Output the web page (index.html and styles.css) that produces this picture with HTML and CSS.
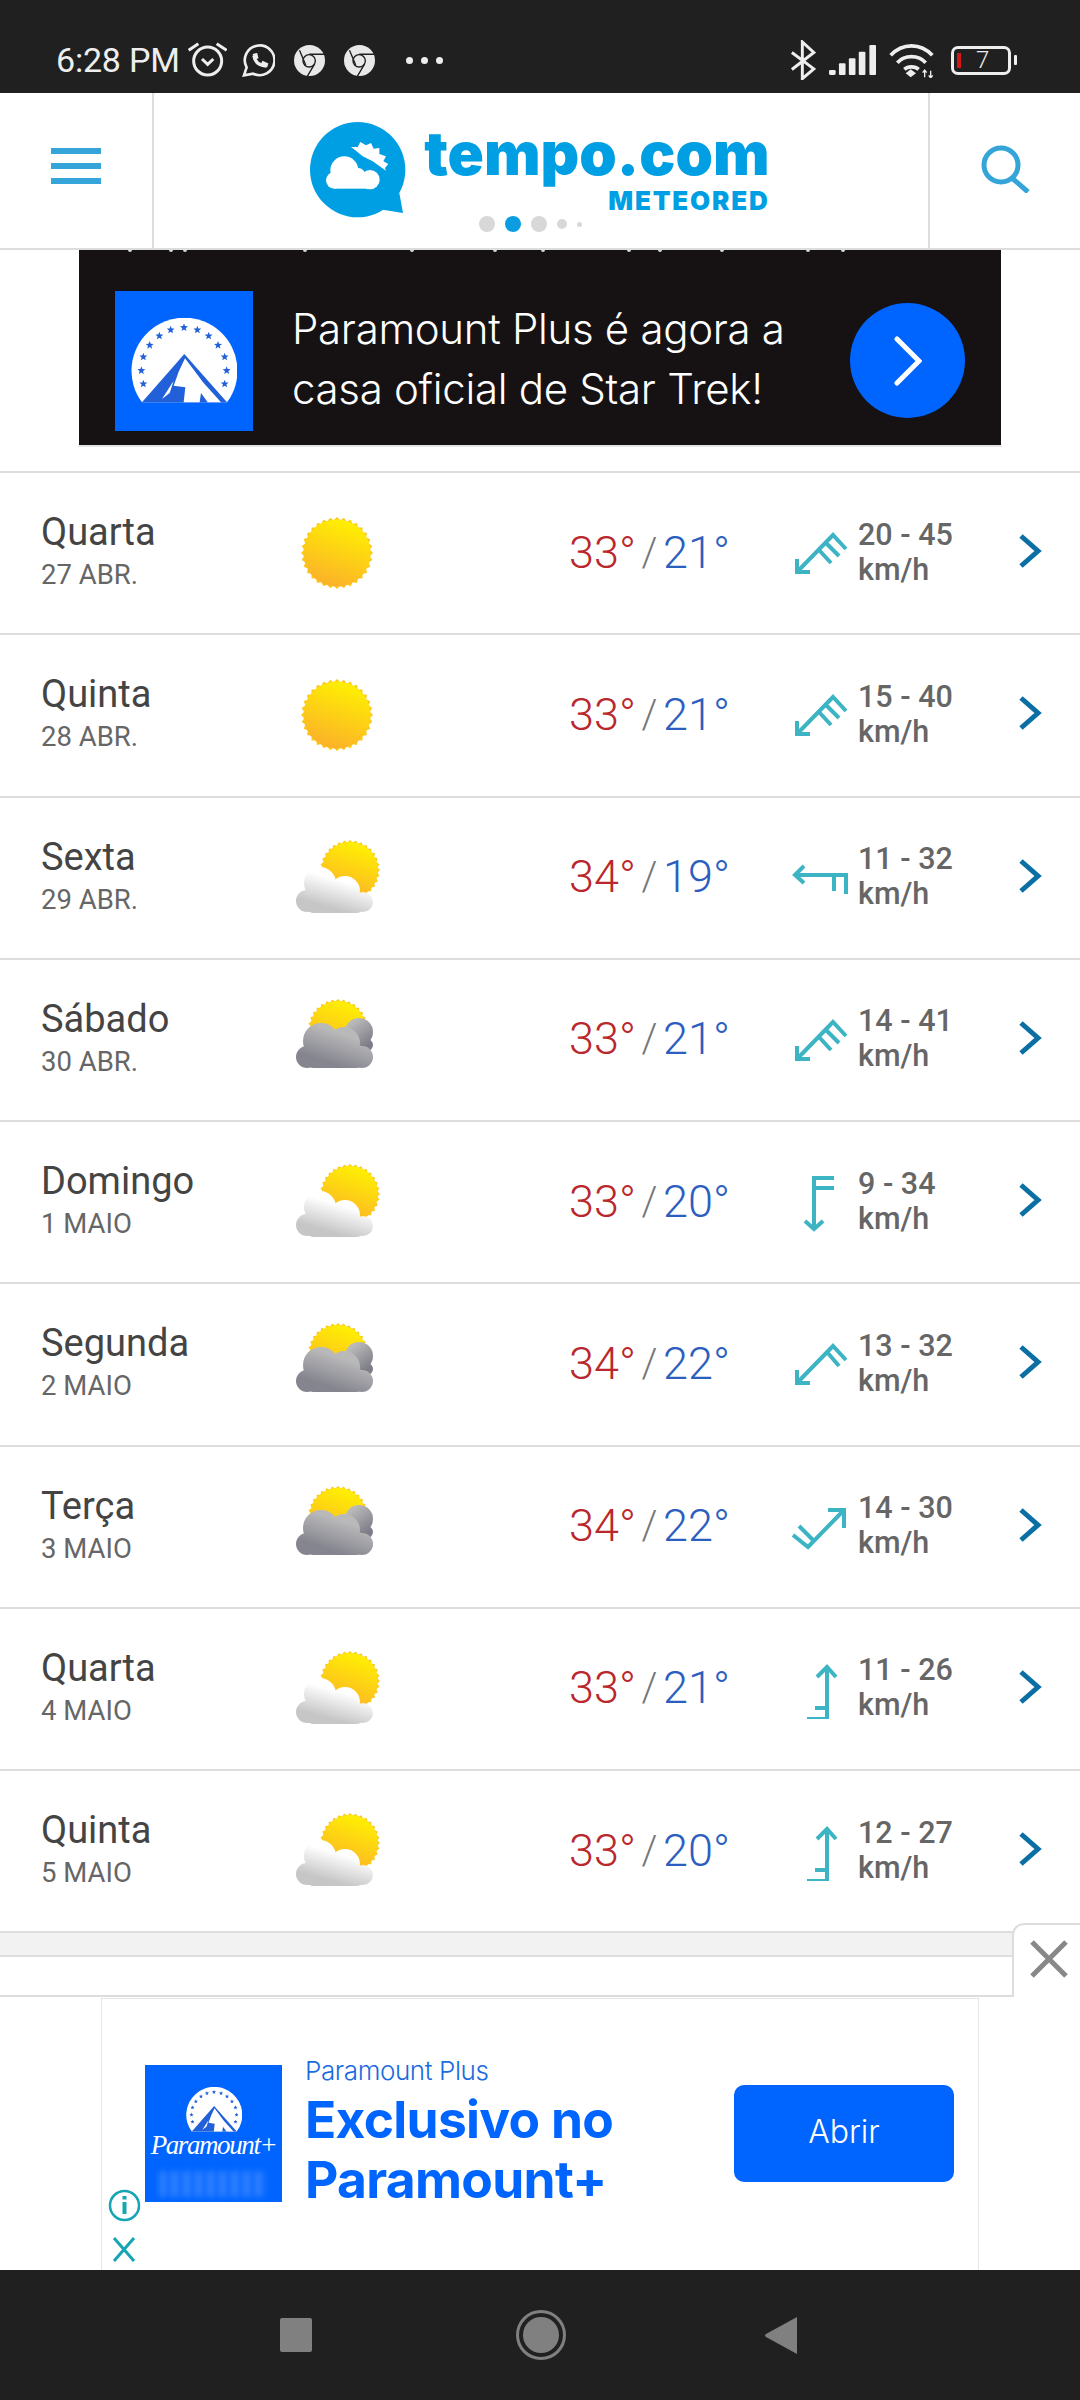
FILE: index.html
```html
<!DOCTYPE html>
<html lang="pt">
<head>
    <meta charset="UTF-8">
    <meta name="viewport" content="width=device-width, initial-scale=1.0">
    <title>tempo.com</title>
    <link rel="stylesheet" href="styles.css">
</head>
<body>
    <svg class="svg-defs" xmlns="http://www.w3.org/2000/svg">
        <defs>
            <linearGradient id="sunFill" x1="0.7" y1="0" x2="0.35" y2="1">
                <stop offset="0" stop-color="#fff200"/>
                <stop offset="1" stop-color="#fbb02a"/>
            </linearGradient>
            <linearGradient id="cloudLight" gradientUnits="userSpaceOnUse" x1="36" y1="44" x2="28" y2="72">
                <stop offset="0" stop-color="#ffffff"/>
                <stop offset="1" stop-color="#c6c6c6"/>
            </linearGradient>
            <linearGradient id="cloudDark" gradientUnits="userSpaceOnUse" x1="42" y1="36" x2="32" y2="66">
                <stop offset="0" stop-color="#b9b9ba"/>
                <stop offset="1" stop-color="#85858f"/>
            </linearGradient>
            <linearGradient id="cloudBack" gradientUnits="userSpaceOnUse" x1="60" y1="28" x2="76" y2="50">
                <stop offset="0" stop-color="#b9b9ba"/>
                <stop offset="1" stop-color="#7d7d88"/>
            </linearGradient>
            <symbol id="spikes" viewBox="-36 -36 72 72">
                <g fill="#fdc81c">
                    <rect x="-25.500" y="-25.500" width="51" height="51"/>
                    <rect x="-25.500" y="-25.500" width="51" height="51" transform="rotate(11.25)"/>
                    <rect x="-25.500" y="-25.500" width="51" height="51" transform="rotate(22.5)"/>
                    <rect x="-25.500" y="-25.500" width="51" height="51" transform="rotate(33.75)"/>
                    <rect x="-25.500" y="-25.500" width="51" height="51" transform="rotate(45)"/>
                    <rect x="-25.500" y="-25.500" width="51" height="51" transform="rotate(56.25)"/>
                    <rect x="-25.500" y="-25.500" width="51" height="51" transform="rotate(67.5)"/>
                    <rect x="-25.500" y="-25.500" width="51" height="51" transform="rotate(78.75)"/>
                </g>
                <circle r="33.500" fill="url(#sunFill)"/>
            </symbol>
            <symbol id="wx-sun" viewBox="0 0 90 90">
                <use href="#spikes" x="9" y="9" width="72" height="72"/>
            </symbol>
            <symbol id="wx-partly" viewBox="0 0 90 90">
                <use href="#spikes" x="28" y="7" width="60" height="60"/>
                <g fill="url(#cloudLight)">
                    <circle cx="28" cy="50" r="16"/>
                    <circle cx="53" cy="58" r="15"/>
                    <circle cx="15" cy="68" r="11"/>
                    <circle cx="71" cy="69" r="10"/>
                    <rect x="15" y="60" width="56" height="20" rx="6"/>
                </g>
            </symbol>
            <symbol id="wx-cloudy" viewBox="0 0 90 90">
                <use href="#spikes" x="16" y="4" width="60" height="60"/>
                <g fill="url(#cloudBack)">
                    <circle cx="67" cy="37" r="14"/>
                    <circle cx="75" cy="50" r="6"/>
                </g>
                <g fill="url(#cloudDark)">
                    <circle cx="29" cy="46" r="18"/>
                    <circle cx="52" cy="48" r="16"/>
                    <circle cx="15" cy="62" r="11"/>
                    <circle cx="70" cy="62" r="11"/>
                    <rect x="15" y="52" width="56" height="21" rx="6"/>
                </g>
            </symbol>
            <symbol id="wind-sw3" viewBox="0 0 60 60">
                <path d="M7 36V49H20M7 49L43 12L56 26M36 20L49 33M29 27L41 40"/>
            </symbol>
            <symbol id="wind-sw2" viewBox="0 0 60 60">
                <path d="M7 36V49H20M7 49L43 12L56 26M37 18L49 32"/>
            </symbol>
            <symbol id="wind-w" viewBox="0 0 60 60">
                <path d="M14 18L5 27L14 35M5 27H56V46M44 27V43"/>
            </symbol>
            <symbol id="wind-s" viewBox="0 0 60 60">
                <path d="M44 6H24V56M44 16H24M15 49L24 57L33 49"/>
            </symbol>
            <symbol id="wind-ne" viewBox="0 0 60 60">
                <path d="M38 13H54V31M54 13L18 50L3 38M23 43L9 29"/>
            </symbol>
            <symbol id="wind-n" viewBox="0 0 60 60">
                <path d="M27 18L37 8L46 18M37 8V60H17M37 49H25"/>
            </symbol>
            <symbol id="chev" viewBox="0 0 24 36">
                <path d="M3 3L20 18L3 33"/>
            </symbol>
            <symbol id="chrome" viewBox="342 30 90 90">
                <circle cx="387" cy="75" r="45" fill="#e8e8e8"/>
                <circle cx="386" cy="76" r="18" fill="#e8e8e8" stroke="#202020" stroke-width="4"/>
                <path d="M386 57H430M358 45L376 88M402 85L380 122" stroke="#202020" stroke-width="4" fill="none"/>
            </symbol>
            <symbol id="star" viewBox="0 0 10 10">
                <polygon points="5,0 6.3,3.4 10,3.6 7.1,6 8.1,9.6 5,7.6 1.900,9.6 2.900,6 0,3.600 3.700,3.400" fill="#2360d8"/>
            </symbol>
            <symbol id="pm-mark" viewBox="62 97 318 255">
                <path d="M95 350A159 159 0 1 1 350 350Z" fill="#fff"/>
                <path d="M222 205L95 350H350Z" fill="#2160d8"/>
                <path d="M224 218L262 268L278 290L332 350H292L272 322L268 350H220L225 305L190 300L205 258Z" fill="#fff"/>
                <path d="M155 340L190 285L178 322Z" fill="#fff"/>
                <use href="#star" x="209" y="113" width="24" height="24"/>
                <use href="#star" x="169" y="120" width="24" height="24"/>
                <use href="#star" x="249" y="120" width="24" height="24"/>
                <use href="#star" x="135" y="138" width="24" height="24"/>
                <use href="#star" x="283" y="138" width="24" height="24"/>
                <use href="#star" x="106" y="166" width="24" height="24"/>
                <use href="#star" x="311" y="166" width="24" height="24"/>
                <use href="#star" x="87" y="201" width="24" height="24"/>
                <use href="#star" x="331" y="201" width="24" height="24"/>
                <use href="#star" x="81" y="242" width="24" height="24"/>
                <use href="#star" x="337" y="242" width="24" height="24"/>
                <use href="#star" x="87" y="282" width="24" height="24"/>
                <use href="#star" x="331" y="282" width="24" height="24"/>
            </symbol>
        </defs>
    </svg>

    <div class="status-bar">
        <span class="clock">6:28 PM</span>
        <svg class="st-alarm" viewBox="21 20 120 108" fill="none" stroke="#eee">
            <circle cx="83" cy="77" r="42" stroke-width="9"/>
            <path d="M26 45L55 25M110 25L140 45" stroke-width="9"/>
            <path d="M66 71L83 87L100 71" stroke-width="9"/>
        </svg>
        <svg class="st-whatsapp" viewBox="186 25 100 100" fill="none" stroke="#eee" stroke-width="8">
            <path d="M192 120L200 96A45 45 0 1 1 220 115Z"/>
            <path d="M222 60Q226 90 260 92" stroke-width="10"/>
            <path d="M218 55L232 52L236 68L226 72ZM244 84L248 76L266 84L262 96Z" fill="#eee" stroke="none"/>
        </svg>
        <svg class="st-chrome"><use href="#chrome"/></svg>
        <svg class="st-chrome st-chrome-2"><use href="#chrome"/></svg>
        <div class="st-dots"><i></i><i></i><i></i></div>
        <div class="st-right">
            <svg class="st-bt" viewBox="25 12 78 122" fill="none" stroke="#eee" stroke-width="9">
                <path d="M30 50L97 100L62 130V18L97 50L30 102"/>
            </svg>
            <svg class="st-signal" viewBox="143 30 142 90" fill="#eee">
                <rect x="143" y="105" width="20" height="15" rx="4"/>
                <rect x="173" y="85" width="20" height="35" rx="3"/>
                <rect x="203" y="70" width="20" height="50" rx="3"/>
                <rect x="233" y="50" width="20" height="70" rx="3"/>
                <rect x="265" y="30" width="20" height="90" rx="3"/>
            </svg>
            <svg class="st-wifi" viewBox="325 25 135 105" fill="none" stroke="#eee" stroke-width="11">
                <path d="M330 62C365 24 420 24 455 62M350 84C372 60 413 60 435 84M371 104C382 94 403 94 414 104"/>
                <path d="M375 116L390 104L406 116L390 128Z" fill="#eee" stroke="none"/>
                <path d="M432 128V108M450 128V108M426 114L432 106L438 114M444 122L450 130L456 122" stroke-width="4"/>
            </svg>
            <div class="battery">
                <div class="battery-body"><i></i><span>7</span></div>
                <div class="battery-tip"></div>
            </div>
        </div>
    </div>

    <header class="site-header">
        <div class="hdr-menu">
            <div class="burger"><i></i><i></i><i></i></div>
        </div>
        <div class="hdr-logo">
            <div class="logo">
                <svg class="logo-bubble" viewBox="27 22 300 300">
                    <circle cx="170" cy="165" r="143" fill="#009fe3"/>
                    <path d="M295 235L306 295L245 285Z" fill="#009fe3"/>
                    <path d="M150 97L170 97L178 82L195 92L210 85L218 102L235 100L235 118L255 125L247 140L262 148L252 160L255 168L215 140L185 125L165 108Z" fill="#fff"/>
                    <g fill="#fff">
                        <circle cx="130" cy="167" r="42"/>
                        <circle cx="100" cy="197" r="25"/>
                        <circle cx="207" cy="195" r="29"/>
                        <circle cx="172" cy="180" r="20"/>
                        <rect x="100" y="190" width="107" height="32"/>
                    </g>
                </svg>
                <div class="logo-text">
                    <span class="logo-name">tempo.com</span>
                    <span class="logo-sub">METEORED</span>
                </div>
            </div>
            <div class="carousel-dots">
                <i></i><i class="on"></i><i></i><i class="sm"></i><i class="xs"></i>
            </div>
        </div>
        <div class="hdr-search">
            <svg class="search-icon" viewBox="0 0 50 48" fill="none" stroke="#35a4d8" stroke-width="5">
                <circle cx="20" cy="20" r="17"/>
                <path d="M31 33L47 47"/>
            </svg>
        </div>
    </header>

    <div class="top-ad">
        <svg class="ad-specks" viewBox="0 0 921 4" fill="#d8d8d8">
            <circle cx="51" cy="0" r="2"/><circle cx="92" cy="0" r="2"/><circle cx="106" cy="0" r="2"/>
            <circle cx="226" cy="0" r="2"/><circle cx="333" cy="0" r="2"/><circle cx="416" cy="0" r="2"/>
            <circle cx="464" cy="0" r="2"/><circle cx="550" cy="0" r="2"/><circle cx="581" cy="0" r="2"/>
            <circle cx="643" cy="0" r="2"/><circle cx="729" cy="0" r="2"/><circle cx="764" cy="0" r="2"/>
        </svg>
        <div class="pm-logo">
            <svg><use href="#pm-mark"/></svg>
        </div>
        <p class="top-ad-text">Paramount Plus é agora a<br>casa oficial de Star Trek!</p>
        <div class="top-ad-btn">
            <svg viewBox="0 0 28 50" fill="none" stroke="#fff" stroke-width="5" stroke-linecap="round">
                <path d="M3 3L25 25L3 47"/>
            </svg>
        </div>
    </div>

    <div class="forecast">
        <div class="day-row">
            <div class="day"><div class="day-name">Quarta</div><div class="day-date">27 ABR.</div></div>
            <svg class="wx"><use href="#wx-sun"/></svg>
            <div class="temp"><span class="hi">33°</span><span class="sep">/</span><span class="lo">21°</span></div>
            <svg class="wind-ico"><use href="#wind-sw3"/></svg>
            <div class="wind">20 - 45<br>km/h</div>
            <svg class="chev"><use href="#chev"/></svg>
        </div>
        <div class="day-row">
            <div class="day"><div class="day-name">Quinta</div><div class="day-date">28 ABR.</div></div>
            <svg class="wx"><use href="#wx-sun"/></svg>
            <div class="temp"><span class="hi">33°</span><span class="sep">/</span><span class="lo">21°</span></div>
            <svg class="wind-ico"><use href="#wind-sw3"/></svg>
            <div class="wind">15 - 40<br>km/h</div>
            <svg class="chev"><use href="#chev"/></svg>
        </div>
        <div class="day-row">
            <div class="day"><div class="day-name">Sexta</div><div class="day-date">29 ABR.</div></div>
            <svg class="wx"><use href="#wx-partly"/></svg>
            <div class="temp"><span class="hi">34°</span><span class="sep">/</span><span class="lo">19°</span></div>
            <svg class="wind-ico"><use href="#wind-w"/></svg>
            <div class="wind">11 - 32<br>km/h</div>
            <svg class="chev"><use href="#chev"/></svg>
        </div>
        <div class="day-row">
            <div class="day"><div class="day-name">Sábado</div><div class="day-date">30 ABR.</div></div>
            <svg class="wx"><use href="#wx-cloudy"/></svg>
            <div class="temp"><span class="hi">33°</span><span class="sep">/</span><span class="lo">21°</span></div>
            <svg class="wind-ico"><use href="#wind-sw3"/></svg>
            <div class="wind">14 - 41<br>km/h</div>
            <svg class="chev"><use href="#chev"/></svg>
        </div>
        <div class="day-row">
            <div class="day"><div class="day-name">Domingo</div><div class="day-date">1 MAIO</div></div>
            <svg class="wx"><use href="#wx-partly"/></svg>
            <div class="temp"><span class="hi">33°</span><span class="sep">/</span><span class="lo">20°</span></div>
            <svg class="wind-ico"><use href="#wind-s"/></svg>
            <div class="wind">9 - 34<br>km/h</div>
            <svg class="chev"><use href="#chev"/></svg>
        </div>
        <div class="day-row">
            <div class="day"><div class="day-name">Segunda</div><div class="day-date">2 MAIO</div></div>
            <svg class="wx"><use href="#wx-cloudy"/></svg>
            <div class="temp"><span class="hi">34°</span><span class="sep">/</span><span class="lo">22°</span></div>
            <svg class="wind-ico"><use href="#wind-sw2"/></svg>
            <div class="wind">13 - 32<br>km/h</div>
            <svg class="chev"><use href="#chev"/></svg>
        </div>
        <div class="day-row">
            <div class="day"><div class="day-name">Terça</div><div class="day-date">3 MAIO</div></div>
            <svg class="wx"><use href="#wx-cloudy"/></svg>
            <div class="temp"><span class="hi">34°</span><span class="sep">/</span><span class="lo">22°</span></div>
            <svg class="wind-ico"><use href="#wind-ne"/></svg>
            <div class="wind">14 - 30<br>km/h</div>
            <svg class="chev"><use href="#chev"/></svg>
        </div>
        <div class="day-row">
            <div class="day"><div class="day-name">Quarta</div><div class="day-date">4 MAIO</div></div>
            <svg class="wx"><use href="#wx-partly"/></svg>
            <div class="temp"><span class="hi">33°</span><span class="sep">/</span><span class="lo">21°</span></div>
            <svg class="wind-ico"><use href="#wind-n"/></svg>
            <div class="wind">11 - 26<br>km/h</div>
            <svg class="chev"><use href="#chev"/></svg>
        </div>
        <div class="day-row">
            <div class="day"><div class="day-name">Quinta</div><div class="day-date">5 MAIO</div></div>
            <svg class="wx"><use href="#wx-partly"/></svg>
            <div class="temp"><span class="hi">33°</span><span class="sep">/</span><span class="lo">20°</span></div>
            <svg class="wind-ico"><use href="#wind-n"/></svg>
            <div class="wind">12 - 27<br>km/h</div>
            <svg class="chev"><use href="#chev"/></svg>
        </div>
    </div>

    <div class="grey-band"></div>
    <div class="white-band"></div>

    <div class="bottom-ad">
        <div class="ad-close">
            <svg viewBox="0 0 38 38" fill="none" stroke="#888" stroke-width="5">
                <path d="M2 2L36 36M36 2L2 36"/>
            </svg>
        </div>
        <div class="ad-box">
            <div class="pm-plus">
                <svg class="pm-plus-dome"><use href="#pm-mark"/></svg>
                <span class="pm-plus-name">Paramount+</span>
                <span class="pm-plus-glow"></span>
            </div>
            <div class="ad-copy">
                <div class="ad-brand">Paramount Plus</div>
                <div class="ad-title">Exclusivo no<br>Paramount+</div>
            </div>
            <div class="ad-btn">Abrir</div>
            <svg class="ad-info" viewBox="0 0 33 33" fill="none" stroke="#15a5b5" stroke-width="2.500">
                <circle cx="16.500" cy="16.500" r="14.500"/>
                <path d="M16.500 13V25M16.500 7V10.500" stroke-width="4"/>
            </svg>
            <svg class="ad-x" viewBox="0 0 24 25" fill="none" stroke="#15a5b5" stroke-width="3">
                <path d="M2 1L22 24M22 1L2 24"/>
            </svg>
        </div>
    </div>

    <div class="nav-bar">
        <div class="nav-square"></div>
        <div class="nav-home"><i></i></div>
        <svg class="nav-back" viewBox="0 0 33 37"><path d="M33 0V37L2 20Q0 18.500 2 17Z" fill="#808080"/></svg>
    </div>
</body>
</html>
```

FILE: styles.css
```css
* {
    box-sizing: border-box;
}
html, body {
    margin: 0;
    padding: 0;
}
body {
    width: 1080px;
    height: 2400px;
    overflow: hidden;
    background-color: white;
    font-family: Roboto, sans-serif;
    display: flex;
    flex-direction: column;
}
.svg-defs {
    position: absolute;
    width: 0;
    height: 0;
}

/* status bar */
.status-bar {
    height: 93px;
    flex: none;
    background-color: #202020;
    color: #eee;
    display: flex;
    align-items: center;
    padding: 27px 63px 0 56px;
}
.clock {
    font-size: 34px;
    width: 131px;
    letter-spacing: -0.2px;
    white-space: nowrap;
}
.st-alarm {
    width: 40px;
    height: 36px;
}
.st-whatsapp {
    width: 33px;
    height: 33px;
    margin-left: 15px;
}
.st-chrome {
    width: 31px;
    height: 31px;
    margin-left: 19px;
}
.st-chrome-2 {
    margin-left: 19px;
}
.st-dots {
    display: flex;
    gap: 8px;
    margin-left: 31px;
}
.st-dots i {
    width: 7px;
    height: 7px;
    border-radius: 50%;
    background-color: #eee;
}
.st-right {
    margin-left: auto;
    display: flex;
    align-items: center;
}
.st-bt {
    width: 26px;
    height: 40px;
}
.st-signal {
    width: 47px;
    height: 30px;
    margin-left: 13px;
}
.st-wifi {
    width: 45px;
    height: 35px;
    margin-left: 13px;
}
.battery {
    display: flex;
    align-items: center;
    margin-left: 17px;
}
.battery-body {
    width: 60px;
    height: 29px;
    border: 3px solid #eee;
    border-radius: 7px;
    display: flex;
    align-items: center;
    padding-left: 3px;
}
.battery-body i {
    width: 4px;
    height: 15px;
    background-color: #d01818;
}
.battery-body span {
    font-size: 24px;
    font-weight: 300;
    margin-left: 15px;
}
.battery-tip {
    width: 3px;
    height: 10px;
    margin-left: 3px;
    background-color: #eee;
    border-radius: 1px;
}

/* header */
.site-header {
    height: 157px;
    flex: none;
    display: flex;
    border-bottom: 2px solid #ddd;
}
.hdr-menu {
    width: 154px;
    border-right: 2px solid #ddd;
    display: flex;
    align-items: center;
    padding: 0 0 0 51px;
}
.burger {
    display: flex;
    flex-direction: column;
    gap: 9px;
    margin-bottom: 10px;
}
.burger i {
    display: block;
    width: 50px;
    height: 6px;
    background-color: #35a4d8;
}
.hdr-logo {
    width: 774px;
    display: flex;
    flex-direction: column;
    align-items: center;
    padding-top: 29px;
}
.logo {
    display: flex;
    width: 460px;
    margin-left: -3px;
}
.logo-bubble {
    width: 100px;
    height: 100px;
    flex: none;
}
.logo-text {
    display: flex;
    flex-direction: column;
    align-items: flex-end;
    margin-left: 17px;
    width: 343px;
    color: #009fe3;
    font-family: Inter, sans-serif;
    font-weight: 900;
}
.logo-name {
    font-size: 60px;
    line-height: 58px;
    margin-top: 2px;
    white-space: nowrap;
}
.logo-sub {
    font-size: 26px;
    line-height: 26px;
    margin-top: 6px;
    letter-spacing: 1.8px;
}
.carousel-dots {
    display: flex;
    align-items: center;
    gap: 10px;
    margin: -6px 0 0 -22px;
}
.carousel-dots i {
    width: 16px;
    height: 16px;
    border-radius: 50%;
    background-color: #d8d8d8;
}
.carousel-dots i.on {
    background-color: #0c9de0;
}
.carousel-dots i.sm {
    width: 10px;
    height: 10px;
}
.carousel-dots i.xs {
    width: 5px;
    height: 5px;
}
.hdr-search {
    flex: 1;
    border-left: 2px solid #ddd;
    padding: 52px 0 0 51px;
}
.search-icon {
    display: block;
    width: 50px;
    height: 48px;
}

/* top ad */
.top-ad {
    width: 922px;
    height: 197px;
    flex: none;
    margin-left: 79px;
    background-color: #161213;
    border-bottom: 2px solid #e4e4e4;
    display: flex;
    align-items: center;
    padding: 26px 36px 0 36px;
    position: relative;
}
.ad-specks {
    position: absolute;
    left: 0;
    top: 0;
    width: 921px;
    height: 4px;
}
.pm-logo {
    width: 138px;
    height: 140px;
    flex: none;
    background-color: #0064ff;
    display: flex;
    align-items: center;
    justify-content: center;
}
.pm-logo svg {
    width: 106px;
    height: 85px;
    margin-top: -1px;
}
.top-ad-text {
    margin: -3px 0 0 39px;
    color: white;
    font-family: Inter, sans-serif;
    font-weight: 300;
    font-size: 42px;
    line-height: 60px;
    white-space: nowrap;
    letter-spacing: -0.3px;
}
.top-ad-btn {
    width: 115px;
    height: 115px;
    margin-left: auto;
    border-radius: 50%;
    background-color: #0064ff;
    display: flex;
    align-items: center;
    justify-content: center;
}
.top-ad-btn svg {
    width: 28px;
    height: 50px;
}

/* forecast rows */
.forecast {
    margin-top: 24px;
    border-top: 2px solid #ddd;
}
.day-row {
    height: 162.25px;
    border-bottom: 2px solid #ddd;
    display: grid;
    grid-template-columns: 251px 90px 408px 68px 160px 24px;
    align-items: center;
    padding-left: 41px;
}
.day {
    margin-top: -5px;
}
.day-name {
    font-size: 38px;
    line-height: 44px;
    color: #444;
}
.day-date {
    font-size: 27.5px;
    line-height: 32px;
    color: #666;
    margin-top: 5px;
}
.wx {
    width: 90px;
    height: 90px;
}
.temp {
    display: flex;
    align-items: center;
    margin: -2px 0 0 187px;
    font-size: 45px;
    font-weight: 300;
}
.hi {
    color: #b9282c;
    width: 71px;
}
.lo {
    color: #2c5ec0;
    margin-left: 4px;
}
.sep {
    color: #777;
    font-size: 40px;
    width: 19px;
    text-align: center;
}
.wind-ico {
    width: 60px;
    height: 60px;
    fill: none;
    stroke: #3db4c4;
    stroke-width: 4;
    overflow: visible;
}
.wind {
    font-size: 30.5px;
    line-height: 35px;
    font-weight: 500;
    color: #666;
    margin-top: -3px;
    white-space: nowrap;
}
.chev {
    width: 24px;
    height: 36px;
    fill: none;
    stroke: #0b6fa4;
    stroke-width: 5;
    margin-top: -4px;
}

/* bands under the table */
.grey-band {
    height: 24px;
    flex: none;
    background-color: #f2f2f2;
    border-bottom: 2px solid #ddd;
}
.white-band {
    height: 40px;
    flex: none;
    border-bottom: 2px solid #ddd;
}

/* bottom ad */
.bottom-ad {
    flex: 1;
    position: relative;
    padding-top: 1px;
}
.ad-close {
    position: absolute;
    right: 0;
    top: -74px;
    width: 68px;
    height: 74px;
    background-color: white;
    border: 2px solid #ddd;
    border-right: none;
    border-bottom: none;
    border-top-left-radius: 12px;
    padding: 15px 0 0 16px;
}
.ad-close svg {
    display: block;
    width: 38px;
    height: 38px;
}
.ad-box {
    width: 878px;
    height: 100%;
    margin-left: 101px;
    border: 1px solid #e6e6e6;
    border-bottom: none;
    display: flex;
    align-items: flex-start;
    padding: 66px 24px 0 43px;
    position: relative;
}
.pm-plus {
    width: 137px;
    height: 137px;
    flex: none;
    background-color: #0064ff;
    display: flex;
    flex-direction: column;
    align-items: center;
    color: white;
    overflow: hidden;
}
.pm-plus-dome {
    width: 56px;
    height: 45px;
    margin-top: 22px;
    flex: none;
}
.pm-plus-name {
    font-family: "Liberation Serif", serif;
    font-style: italic;
    font-size: 27px;
    margin-top: -2px;
    white-space: nowrap;
    letter-spacing: -1.4px;
}
.pm-plus-glow {
    width: 108px;
    height: 26px;
    margin-top: 10px;
    background: repeating-linear-gradient(90deg, #5a9bff 0 5px, #0f6cff 5px 12px);
    filter: blur(3px);
    opacity: 0.7;
}
.ad-copy {
    margin-left: 23px;
    margin-top: -12px;
}
.ad-brand {
    font-family: Inter, sans-serif;
    font-weight: 300;
    font-size: 26px;
    line-height: 36px;
    color: #1a6ae0;
    letter-spacing: -0.4px;
}
.ad-title {
    font-family: Inter, sans-serif;
    font-weight: 700;
    font-size: 51.5px;
    line-height: 60px;
    color: #0064ff;
    margin-top: 0;
    letter-spacing: -0.7px;
}
.ad-btn {
    width: 220px;
    height: 97px;
    margin: 20px 0 0 auto;
    padding-bottom: 4px;
    background-color: #0064ff;
    border-radius: 10px;
    color: white;
    font-family: Inter, sans-serif;
    font-weight: 300;
    font-size: 32px;
    display: flex;
    align-items: center;
    justify-content: center;
}
.ad-info {
    position: absolute;
    left: 6px;
    top: 190px;
    width: 33px;
    height: 33px;
}
.ad-x {
    position: absolute;
    left: 10px;
    top: 238px;
    width: 24px;
    height: 25px;
}

/* android nav */
.nav-bar {
    height: 130px;
    flex: none;
    background-color: #202020;
    display: flex;
    align-items: center;
    padding: 0 0 0 280px;
}
.nav-square {
    width: 32px;
    height: 34px;
    background-color: #808080;
    border-radius: 2px;
}
.nav-home {
    width: 50px;
    height: 50px;
    margin-left: 204px;
    border: 3px solid #808080;
    border-radius: 50%;
    padding: 4px;
}
.nav-home i {
    display: block;
    width: 36px;
    height: 36px;
    border-radius: 50%;
    background-color: #808080;
}
.nav-back {
    width: 33px;
    height: 37px;
    margin-left: 198px;
}
```
